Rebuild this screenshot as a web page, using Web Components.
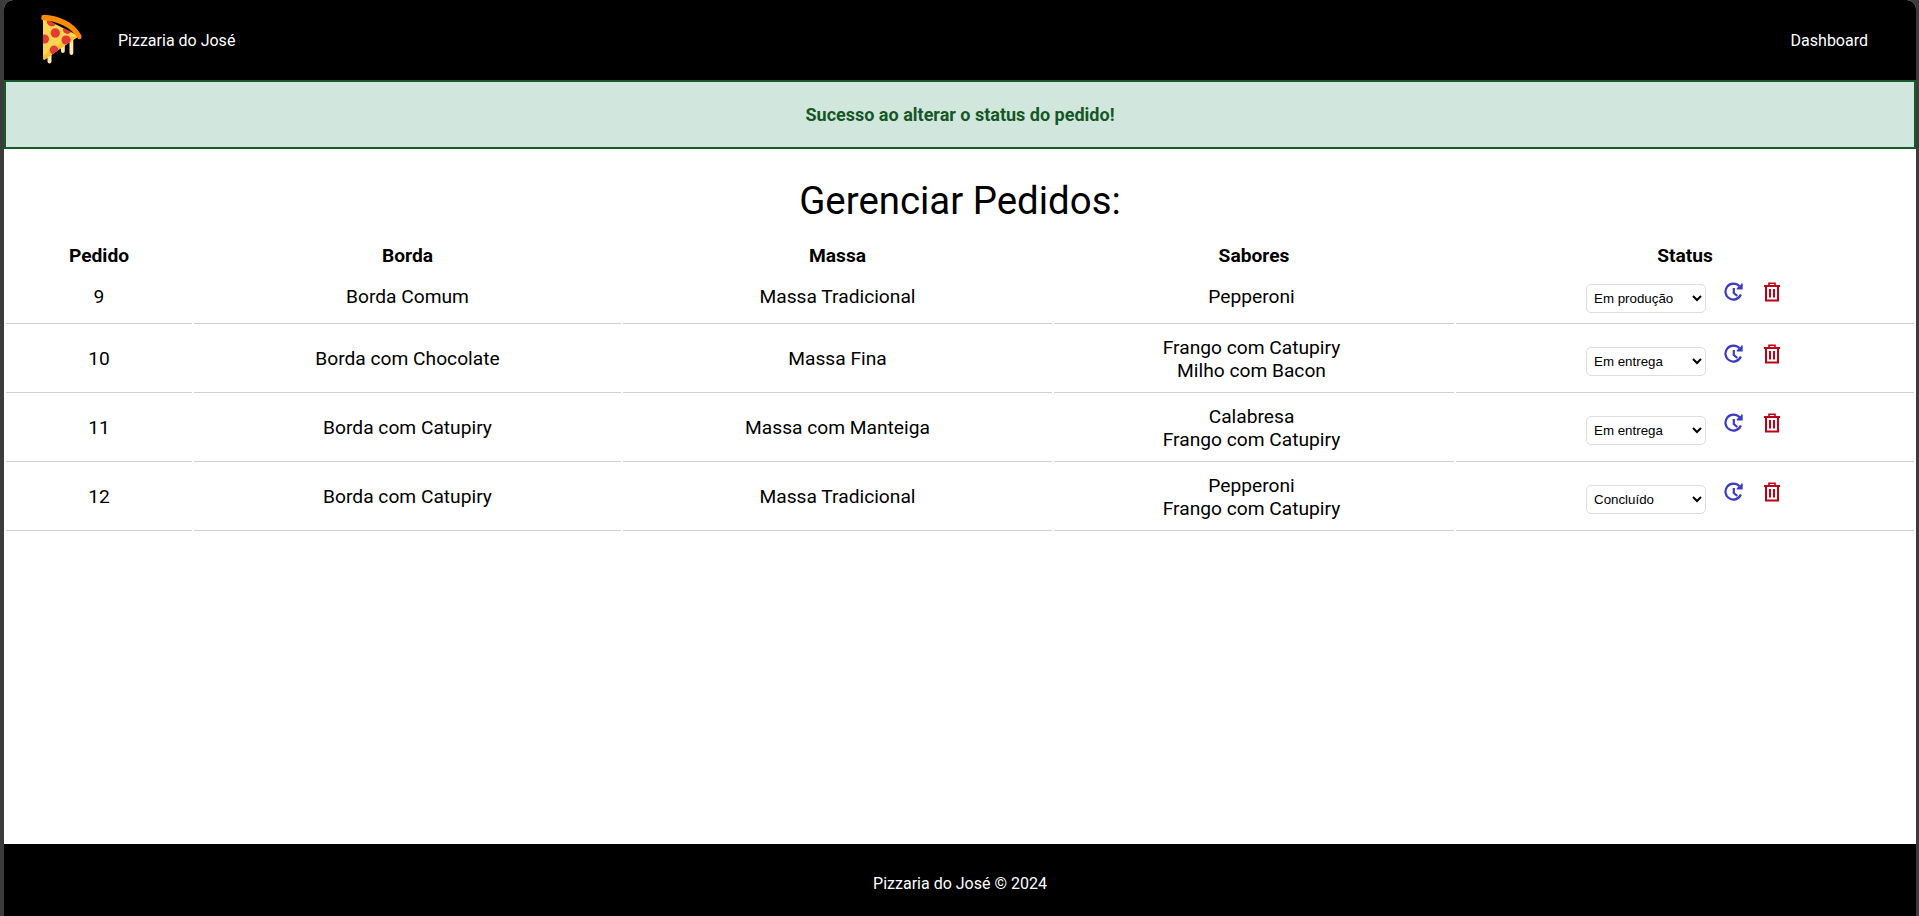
<!DOCTYPE html>
<html lang="pt-BR">
<head>
<meta charset="utf-8">
<title>Pizzaria do José</title>
<style>
  html, body { margin: 0; height: 100%; }
  body {
    background: #3b3b3b;
    padding: 0 3px 0 4px;
    box-sizing: border-box;
    font-family: Roboto, "Liberation Sans", sans-serif;
    color: #000;
    --cols: 186px 427px 429px 400px 458px;
  }
  app-shell { height: 916px; }
</style>
</head>
<body>
<app-shell>
  <pizza-nav slot="top" brand="Pizzaria do José" link="Dashboard"></pizza-nav>
  <status-alert slot="top">Sucesso ao alterar o status do pedido!</status-alert>
  <orders-board title-text="Gerenciar Pedidos:">
    <order-row num="9" borda="Borda Comum" massa="Massa Tradicional" status="Em produção" first>
      <div>Pepperoni</div>
    </order-row>
    <order-row num="10" borda="Borda com Chocolate" massa="Massa Fina" status="Em entrega">
      <div>Frango com Catupiry</div><div>Milho com Bacon</div>
    </order-row>
    <order-row num="11" borda="Borda com Catupiry" massa="Massa com Manteiga" status="Em entrega">
      <div>Calabresa</div><div>Frango com Catupiry</div>
    </order-row>
    <order-row num="12" borda="Borda com Catupiry" massa="Massa Tradicional" status="Concluído">
      <div>Pepperoni</div><div>Frango com Catupiry</div>
    </order-row>
  </orders-board>
  <pizza-footer slot="bottom">Pizzaria do José © 2024</pizza-footer>
</app-shell>

<script>
"use strict";

class AppShell extends HTMLElement {
  constructor() {
    super();
    this.attachShadow({ mode: "open" });
    this.shadowRoot.innerHTML = `
      <style>
        :host { display: flex; flex-direction: column; background: #fff; border-radius: 9px 9px 0 0; overflow: hidden; }
        main { flex: 1; min-height: 0; }
      </style>
      <slot name="top"></slot>
      <main><slot></slot></main>
      <slot name="bottom"></slot>`;
  }
}

class PizzaNav extends HTMLElement {
  constructor() {
    super();
    this.attachShadow({ mode: "open" });
  }
  connectedCallback() {
    this.shadowRoot.innerHTML = `
      <style>
        :host { display: flex; align-items: center; height: 80px; background: #000; color: #fff; font-size: 16px; padding: 0 48px 0 36px; }
        svg { display: block; width: 42px; height: 50px; margin-top: -2px; }
        .brand { margin-left: 36px; }
        .link { margin-left: auto; color: #fff; text-decoration: none; }
      </style>
      <svg viewBox="0 0 42 50" aria-hidden="true">
        <defs>
          <clipPath id="slice"><path d="M3 4 L39 22 L17 37 L5 45.5 Q3 46 3 44Z"/></clipPath>
        </defs>
        <path d="M29.5 24 V39 a1.9 1.9 0 0 0 3.8 0 V22Z" fill="#ffe9a8"/>
        <path d="M21 30 V37 a1.9 1.9 0 0 0 3.8 0 V28Z" fill="#ffe9a8"/>
        <path d="M7.5 42 V47.5 a2 2 0 0 0 4 0 V39Z" fill="#ffe9a8"/>
        <path d="M3 4 L39 22 L17 37 L5 45.5 Q3 46 3 44Z" fill="#ffd54f"/>
        <g clip-path="url(#slice)">
          <path d="M39 22 L17 37 L5 46 L3 46 L3 42 L14 34 L31 23Z" fill="#fbc02d"/>
          <circle cx="11.7" cy="7.7" r="4.8" fill="#e53935"/>
          <circle cx="15.3" cy="19" r="4.7" fill="#e53935"/>
          <circle cx="27.3" cy="15.5" r="4.4" fill="#e53935"/>
          <circle cx="26" cy="26" r="4.6" fill="#e53935"/>
          <circle cx="14" cy="36" r="4.4" fill="#e53935"/>
          <circle cx="4.5" cy="25" r="4.6" fill="#e53935"/>
        </g>
        <path d="M1.8 6 Q0 1.4 3.6 .8 C18 1.2 34.5 8 41.4 21.5 Q42.2 26 38.4 25 C31 13 18 7.4 1.8 6Z" fill="#fb8c00"/>
      </svg>
      <span class="brand">${this.getAttribute("brand")}</span>
      <a class="link" href="#">${this.getAttribute("link")}</a>`;
  }
}

class StatusAlert extends HTMLElement {
  constructor() {
    super();
    this.attachShadow({ mode: "open" });
    this.shadowRoot.innerHTML = `
      <style>
        :host { display: flex; align-items: center; justify-content: center; height: 69px; box-sizing: border-box;
                background: #d1e7dd; border: 2px solid #155a2d; color: #155724; font-size: 18px; font-weight: 700; }
      </style>
      <slot></slot>`;
  }
}

class OrdersBoard extends HTMLElement {
  constructor() {
    super();
    this.attachShadow({ mode: "open" });
  }
  connectedCallback() {
    this.shadowRoot.innerHTML = `
      <style>
        :host { display: block; padding: 0 2px; font-size: 19.2px; }
        h1 { margin: 28px 0 0; font-size: 38.4px; font-weight: 400; text-align: center; line-height: 47px; }
        .head { display: grid; grid-template-columns: var(--cols); column-gap: 2px; margin-top: 20px; font-weight: 700; text-align: center; line-height: 24px; }
      </style>
      <h1>${this.getAttribute("title-text")}</h1>
      <div class="head"><div>Pedido</div><div>Borda</div><div>Massa</div><div>Sabores</div><div>Status</div></div>
      <slot></slot>`;
  }
}

class OrderRow extends HTMLElement {
  constructor() {
    super();
    this.attachShadow({ mode: "open" });
  }
  connectedCallback() {
    const rowHeight = this.hasAttribute("first") ? 53 : 66;
    this.shadowRoot.innerHTML = `
      <style>
        :host { display: grid; grid-template-columns: var(--cols); column-gap: 2px; }
        .cell { height: ${rowHeight}px; padding-top: 2px; display: flex; flex-direction: column; align-items: center; justify-content: center;
                text-align: center; border-bottom: 1px solid #d0d0d0; line-height: 23.5px; }
        .sabores { padding-right: 5px; box-sizing: content-box; width: 395px; }
        .status { flex-direction: row; gap: 18px; }
        .actions { display: flex; gap: 19px; margin-top: -10px; margin-right: 3px; }
      </style>
      <div class="cell">${this.getAttribute("num")}</div>
      <div class="cell">${this.getAttribute("borda")}</div>
      <div class="cell">${this.getAttribute("massa")}</div>
      <div class="cell sabores"><slot></slot></div>
      <div class="cell status">
        <status-select value="${this.getAttribute("status")}"></status-select>
        <div class="actions"><refresh-icon></refresh-icon><trash-icon></trash-icon></div>
      </div>`;
  }
}

class StatusSelect extends HTMLElement {
  constructor() {
    super();
    this.attachShadow({ mode: "open" });
  }
  connectedCallback() {
    const current = this.getAttribute("value");
    const options = ["Em produção", "Em entrega", "Concluído"]
      .map(o => `<option${o === current ? " selected" : ""}>${o}</option>`).join("");
    this.shadowRoot.innerHTML = `
      <style>
        :host { display: block; margin-top: 4px; }
        select { display: block; width: 120px; height: 29px; box-sizing: border-box; padding: 0 3px; background: #fff;
                 border: 1px solid #ddd; border-radius: 5px; font: 13.33px "Liberation Sans", Arial, sans-serif; color: #000; }
      </style>
      <select>${options}</select>`;
  }
}

class RefreshIcon extends HTMLElement {
  constructor() {
    super();
    this.attachShadow({ mode: "open" });
    this.shadowRoot.innerHTML = `
      <style>:host { display: block; width: 20px; height: 20px; } svg { display: block; }</style>
      <svg viewBox="0 0 20 20" width="20" height="20" fill="none" stroke="#3b3bc4" stroke-width="2.2">
        <path d="M16.9 12.5 A8 8 0 1 1 15.5 4.3"/>
        <path d="M17.9 1.5 V6.6 H12.8" fill="#3b3bc4" stroke-width="1.6"/>
        <path d="M9.8 6 V11 L13.3 14"/>
      </svg>`;
  }
}

class TrashIcon extends HTMLElement {
  constructor() {
    super();
    this.attachShadow({ mode: "open" });
    this.shadowRoot.innerHTML = `
      <style>:host { display: block; width: 18px; height: 20px; } svg { display: block; }</style>
      <svg viewBox="0 0 18 20" width="18" height="20" fill="none" stroke="#c00015" stroke-width="2">
        <path d="M1 4 H17"/>
        <path d="M6 4 V1.2 H12 V4" stroke-width="1.6"/>
        <path d="M3 4 V18.5 H15 V4"/>
        <path d="M7 7 V15.5 M11 7 V15.5"/>
      </svg>`;
  }
}

class PizzaFooter extends HTMLElement {
  constructor() {
    super();
    this.attachShadow({ mode: "open" });
    this.shadowRoot.innerHTML = `
      <style>
        :host { display: flex; align-items: center; justify-content: center; height: 72px; box-sizing: border-box; padding-top: 7px; background: #000; color: #fff; font-size: 16px; }
      </style>
      <slot></slot>`;
  }
}

customElements.define("app-shell", AppShell);
customElements.define("pizza-nav", PizzaNav);
customElements.define("status-alert", StatusAlert);
customElements.define("orders-board", OrdersBoard);
customElements.define("order-row", OrderRow);
customElements.define("status-select", StatusSelect);
customElements.define("refresh-icon", RefreshIcon);
customElements.define("trash-icon", TrashIcon);
customElements.define("pizza-footer", PizzaFooter);
</script>
</body>
</html>
